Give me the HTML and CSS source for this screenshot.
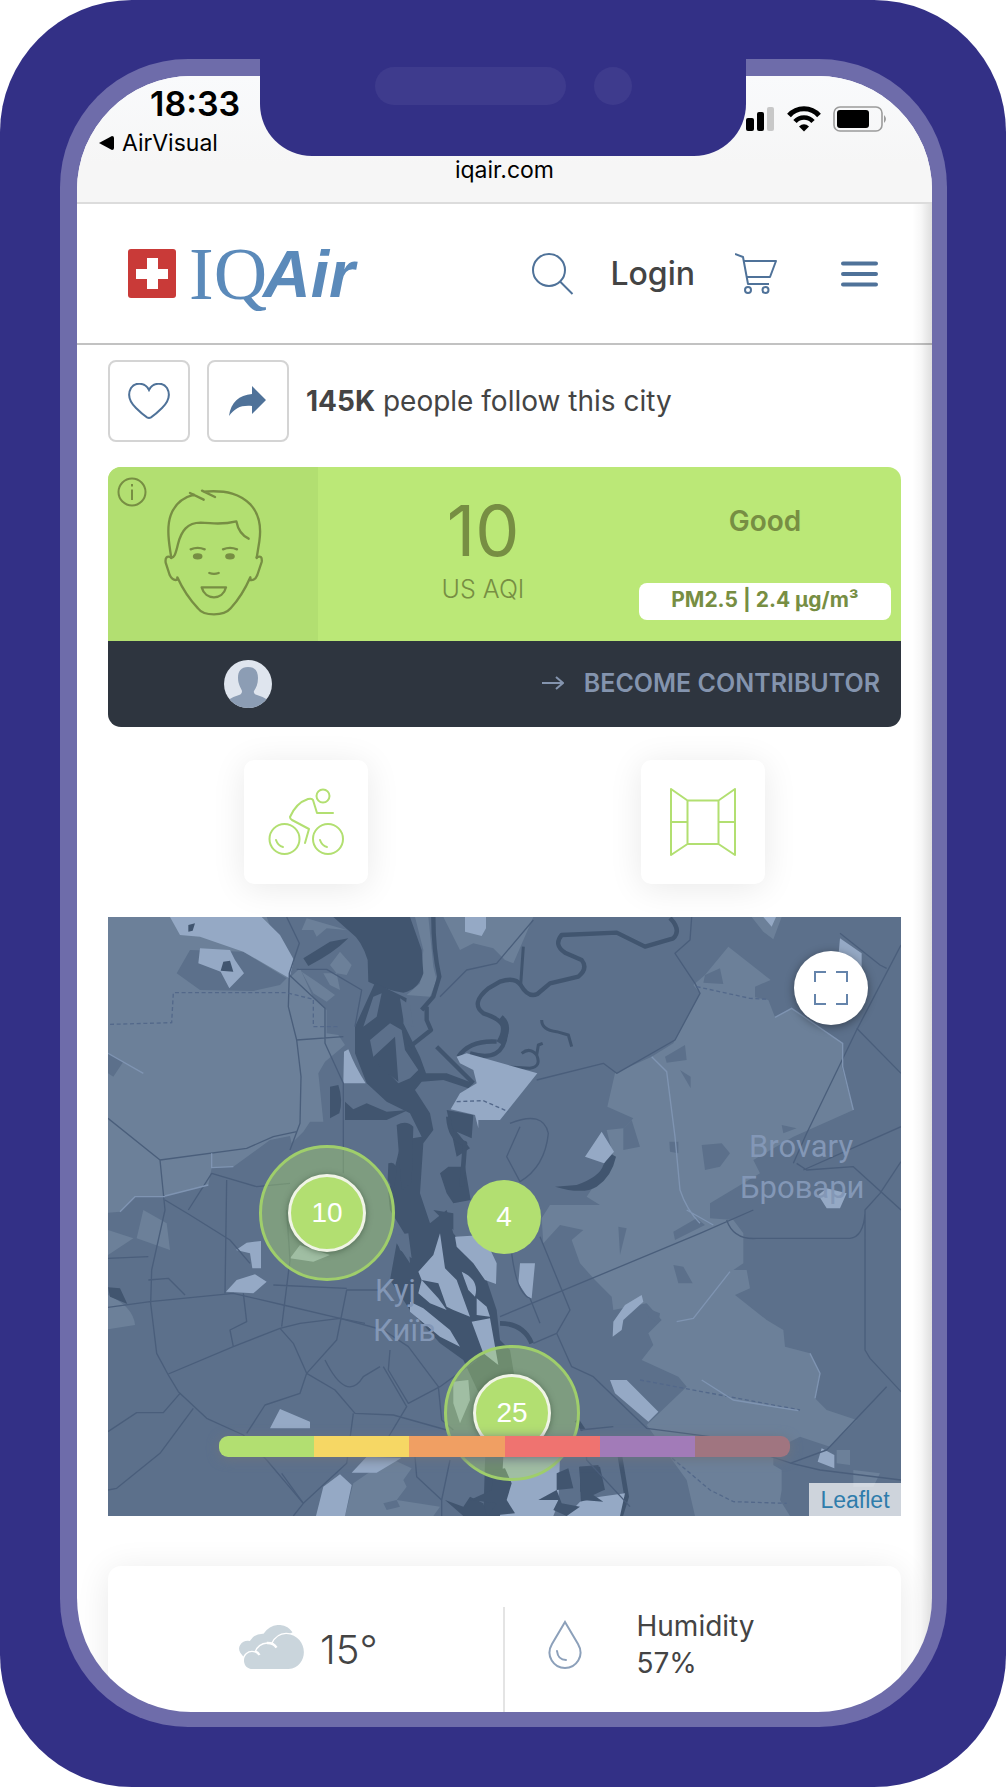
FILE: index.html
```html
<!DOCTYPE html>
<html lang="en">
<head>
<meta charset="utf-8">
<meta name="viewport" content="width=device-width, initial-scale=1">
<title>IQAir – Kyiv air quality</title>
<link rel="stylesheet" href="styles.css">
</head>
<body>
<div class="phone">
  <div class="notch"><span class="speaker"></span><span class="camera"></span></div>
  <div class="bezel">
    <div class="screen">
      <div class="status">
        <div class="status-left">
          <span class="clock">18:33</span>
          <a class="back" href="#"><svg width="15" height="14" viewBox="0 0 15 14" aria-hidden="true"><path d="M0 7 L13 0 Q15 0 15 2 V12 Q15 14 13 14Z"/></svg>AirVisual</a>
        </div>
        <span class="domain">iqair.com</span>
        <svg class="signals" width="142" height="26" viewBox="0 0 142 26" aria-hidden="true">
          <rect x="0" y="12" width="8" height="13" rx="2"/><rect x="11" y="6" width="7" height="19" rx="2"/><rect x="21" y="1" width="7" height="24" rx="2" fill="#c8c8c8"/>
          <g fill="none" stroke="#000" stroke-width="5"><path d="M43 9.500 A20 20 0 0 1 73 9.500"/><path d="M49 15.500 A12 12 0 0 1 67 15.500" stroke-width="4.500"/></g>
          <path d="M53 20.500 Q58 16 63 20.500 L58 25.500Z"/>
          <rect x="88" y="1" width="48" height="24" rx="6" fill="none" stroke="#9b9b9b" stroke-width="1.600"/><rect x="91" y="4" width="32" height="18" rx="3"/><path d="M138 9 q4 4 0 8z" fill="#9b9b9b"/>
        </svg>
      </div>

      <div class="page">
        <header class="header">
          <a class="logo" href="#" aria-label="IQAir home">
            <svg width="48" height="49" viewBox="0 0 48 49" aria-hidden="true"><rect width="48" height="49" rx="3" fill="#c93a38"/><path d="M19 9h11v11h10v10H30v10H19V30H8V20h11z" fill="#fff"/></svg>
            <span class="logo-iq">IQ</span><span class="logo-air">Air</span>
          </a>
          <nav class="tools" aria-label="Main">
            <button class="icon-btn search" aria-label="Search"><svg width="42" height="42" viewBox="0 0 42 42"><circle cx="17" cy="17" r="16"/><path d="M28 28.500 L40.500 41"/></svg></button>
            <a class="login" href="#">Login</a>
            <button class="icon-btn cart" aria-label="Cart"><svg width="42" height="42" viewBox="0 0 42 42"><path d="M0 1 L8 4 L13 31 H34 M8.500 8 H41 L35 24 H11.500"/><circle cx="13" cy="37" r="3"/><circle cx="30.500" cy="37" r="3"/></svg></button>
            <button class="icon-btn menu" aria-label="Menu"><svg width="37" height="26" viewBox="0 0 37 26"><path d="M2 2.500H35M2 13H35M2 23.500H35" stroke-width="4" stroke-linecap="round"/></svg></button>
          </nav>
        </header>

        <main class="content">
          <div class="follow">
            <button class="square" aria-label="Follow"><svg width="42" height="36" viewBox="0 0 42 36"><path d="M21 7 C17 -1 7 -1 3 5 C-1 12 2 19 8 25 Q14 31 19 34.300 Q21 35.500 23 34.300 Q28 31 34 25 C40 19 43 12 39 5 C35 -1 25 -1 21 7Z"/></svg></button>
            <button class="square share" aria-label="Share"><svg width="38" height="30" viewBox="0 0 38 30"><path d="M0 30 C2 16 10 9 23 8 V0 L37 14 L23 28 V20 C12 19 6 22 0 30Z"/></svg></button>
            <p class="followers"><b>145K</b> people follow this city</p>
          </div>

          <section class="aqi">
            <div class="aqi-top">
              <div class="aqi-face">
                <svg class="info" width="30" height="30" viewBox="0 0 30 30" aria-hidden="true"><circle cx="15" cy="15" r="13.500"/><path d="M15 12.500V23M15 7v2.500"/></svg>
                <svg class="face" width="100" height="128" viewBox="310 445 300 384" aria-hidden="true">
                  <path d="M332 652 C325 610 317 560 330 524 C342 490 365 471 400 462 M388 457 L429 477 M424 450 L463 469 M428 453 C500 447 540 461 570 492 C597 522 602 562 596 602 L588 652"/>
                  <path d="M330 650 C340 654 345 640 352 610 C362 570 380 546 420 546 C460 547 480 554 527 542 C532 568 542 584 564 594"/>
                  <path d="M332 650 Q312 642 315 666 L327 703 Q337 722 350 717 L350 710 Q375 765 412 803 Q425 821 460 821 Q495 821 510 803 Q545 765 569 710 L570 718 Q583 720 590 703 L603 664 Q606 642 588 650"/>
                  <path d="M390 626 Q411 617 432 626 M487 626 Q508 617 529 626 M446 697 Q460 702 474 697 M423 740 H496 C486 780 434 780 423 740Z"/>
                  <ellipse cx="411" cy="647" rx="11" ry="6" class="eye"/><ellipse cx="508" cy="647" rx="11" ry="6" class="eye"/>
                </svg>
              </div>
              <div class="aqi-value"><span class="num">10</span><span class="unit">US AQI</span></div>
              <div class="aqi-level"><span class="level">Good</span><span class="pm">PM2.5 | 2.4 µg/m³</span></div>
            </div>
            <div class="aqi-bottom">
              <svg width="48" height="48" viewBox="0 0 48 48" aria-hidden="true"><defs><clipPath id="avatar"><circle cx="24" cy="24" r="24"/></clipPath></defs><g clip-path="url(#avatar)"><path fill="#dfe5ee" d="M0 0h48v48H0z"/><path fill="#8c9db4" d="M24 7 C17 7 14 11 14 18 C14 24 17 28 18 31 Q18 34 15 35 Q8 37 4 40 V48 H44 V40 Q40 37 33 35 Q29 34 30 31 C32 28 34 24 34 18 C34 11 31 7 24 7Z"/></g></svg>
              <a class="contribute" href="#"><svg width="22" height="14" viewBox="0 0 22 14" aria-hidden="true"><path d="M0 7H21M14 1L21 7L14 13"/></svg>BECOME CONTRIBUTOR</a>
            </div>
          </section>

          <div class="tiles">
            <div class="tile"><svg width="76" height="68" viewBox="0 0 76 68" role="img" aria-label="Cycling"><circle cx="16.500" cy="51" r="15"/><circle cx="60" cy="51" r="15"/><circle cx="55" cy="8" r="6.500"/><path d="M65 25 H49 L45 12 Q44 10 40 11 Q28 15 22 29 Q22 31 24 32 L41 41 L37 55 M8 52 Q10 58 15 59 M52 52 Q54 58 59 59"/></svg></div>
            <div class="tile"><svg width="66" height="68" viewBox="0 0 66 68" role="img" aria-label="Windows open"><path d="M17.500 12.500H48.500V56H17.500Z M17.500 12.500 L1 1 V67 L17.500 56 M48.500 12.500 L65 1 V67 L48.500 56 M1 34H17.500 M48.500 34H65"/></svg></div>
          </div>

          <section class="map" aria-label="Air quality map">
            <svg class="terrain" viewBox="0 0 793 599" preserveAspectRatio="xMidYMid slice" aria-hidden="true">
              <rect width="793" height="599" fill="#5c708b"/>
              <g transform="translate(-8 -7) scale(.33333333)">
                <g class="wood">
                  <path d="M24 21H500L568 205L600 175L640 265L680 300V370L715 375L735 405L675 455L655 490L670 635L630 635L610 665L575 700L570 678L510 690L400 770L335 773L325 825L195 858L105 860L60 905L24 908Z"/>
                  <path d="M605 60L620 25L740 60L680 55L650 80L640 60ZM690 165L720 125L755 165L740 195L710 190ZM605 185L650 215L705 255L680 275L640 250ZM670 190L710 190L720 240L690 225Z"/>
                  <path d="M945 21H985L1000 170L1010 210L990 260L920 255L960 220L970 120ZM1030 21H1300L1240 160L1215 150L1180 115L1120 100L1080 120Z"/>
                  <path d="M24 960L100 985L24 1035ZM130 900L200 940L210 1020L110 985ZM24 1155Q100 1190 105 1245L24 1258Z"/>
                  <path d="M1955 21H2045L2020 88L1990 65ZM1815 195L1885 110L2012 210L1965 230V262L2005 270L2025 322L2075 295L2228 400L2225 470L2260 600L2080 680L1960 750L1980 790L1830 880L1830 925L1900 930L1930 970V1060L1900 1080L1940 1080L1950 1135L1905 1155L2000 1230L2050 1260L2055 1310L2130 1330L2160 1390L2145 1465L2180 1500L2270 1530L2190 1610L2100 1580L2020 1620V1665L2045 1680V1740L2040 1770L2070 1818H1785L1760 1710L1640 1545L1760 1430L1735 1400L1625 1350L1660 1305L1645 1270L1685 1230L1640 1180L1540 1200L1535 1160L1485 1110L1440 1060L1415 990L1450 960L1380 945L1330 1000L1325 925L1350 885H1500L1460 860L1540 740L1520 660L1570 655L1600 625L1522 590L1545 490L1655 440L1720 400L1800 250L1780 225Z"/>
                  <path d="M2210 1620H2250V1665L2210 1660ZM2260 1680L2340 1690L2320 1730H2260ZM760 1720L870 1645L935 1675L910 1710L920 1730L890 1770L1020 1790L1000 1818H735Z"/>
                </g>
                <g class="land">
                  <path d="M230 190L270 120L430 125L560 205L540 225L460 243L300 240ZM24 430L70 455L40 500L24 490Z"/>
                  <path d="M1815 195L1860 175L1870 222L1810 218ZM1695 440L1755 405L1760 450L1700 458ZM1740 480L1772 500V535ZM1805 705L1865 700L1890 730L1860 770L1815 780ZM1708 695H1735V730L1710 725ZM1570 655V720L1620 710L1595 630ZM1720 965L1790 925L1815 945L1725 990ZM1720 1065L1750 1070L1778 1120H1735ZM1555 950L1580 955L1560 1035ZM1630 1190L1680 1210L1675 1240L1645 1220ZM850 1780L890 1770L900 1790L860 1800ZM2045 645L2090 655L2050 670Z"/>
                </g>
                <g class="water">
                  <path d="M700 21H930L965 120L970 190Q955 240 910 248Q850 238 805 215L803 150Q785 90 750 65ZM610 145L690 95L745 85Q700 130 625 168Z"/>
                  <path d="M825 218L880 245L920 265L910 340L960 440L978 490L1040 490L1120 520L1105 535L1030 510L965 515L945 540L990 610L1000 660L970 700L960 850L990 940L1040 900L1060 970L1150 1080L1190 1200L1200 1290L1230 1320L1260 1500L1240 1818L1150 1818L1160 1500L1090 1350L1020 1300L930 1200L870 1110L890 1000L930 1060L925 990L870 900L865 850L905 690L965 680L930 610L860 575L800 520L765 430L765 350Z"/>
                  <path d="M690 530L715 525Q730 570 718 610L690 625ZM735 575L760 598L800 580L860 605L925 600L860 630H735ZM890 645Q920 630 940 650L935 820L905 840ZM865 760Q890 750 890 790L880 840L863 810ZM1040 600L1120 615L1115 685L1070 665L1110 715L1070 740ZM1020 790L1045 770H1095L1112 870L1060 880L1040 850Z"/>
                  <path d="M1365 830L1430 825Q1500 800 1510 765L1530 730L1548 740Q1535 800 1490 830Q1450 855 1365 830ZM24 1132L60 1135L82 1182L30 1160Z"/>
                  <path d="M1035 1770L1090 1790L1110 1760L1150 1780L1160 1818H1090ZM1440 1725Q1465 1720 1485 1780L1480 1818H1445ZM1440 1670H1500L1515 1740L1440 1745Z"/>
                </g>
                <g class="land">
                  <path d="M870 340L905 360L915 420L955 480L930 505L895 520L820 440L810 390ZM820 260L845 250L830 320L790 350ZM900 265L930 285L940 350L912 340ZM885 975L925 970L935 1045L900 1020Z"/>
                </g>
                <g class="water"><path d="M820 440L885 380L895 515L840 470ZM1000 900L1060 960L1060 910Z"/></g>
                <g class="river">
                  <path stroke-width="13" d="M1000 21Q1000 120 1018 200L1000 260L965 300M980 290V330L993 360L930 410M1010 410L1120 520M1075 440Q1110 390 1190 395M1110 430Q1210 460 1218 370Q1215 330 1150 310Q1110 280 1165 235L1200 215Q1245 200 1262 225Q1285 265 1312 252L1350 220L1435 200Q1465 175 1445 150L1395 128Q1360 105 1385 75L1550 68L1635 110L1720 85Q1745 60 1710 24"/>
                  <path stroke-width="9" d="M1270 110L1262 225M1325 330Q1325 360 1370 365L1405 375L1415 410M1265 430Q1290 410 1310 435Q1325 470 1290 475L1210 470M1310 435L1315 405L1328 400"/>
                  <path stroke-width="24" d="M1200 325Q1230 350 1200 400"/>
                  <path stroke-width="14" d="M1045 620Q1050 690 1095 700L1085 830M1200 1240Q1270 1240 1295 1300M1560 1640L1580 1760L1562 1818M1430 1530L1450 1560"/>
                </g>
                <g class="light">
                  <path d="M210 21H485L540 75L582 150L568 205L430 125L300 80L240 75ZM300 115L390 120L405 150L432 190L388 235L362 185L295 160ZM1095 21H1158V55L1145 78L1095 65ZM732 425L745 418Q765 470 797 520H730ZM1070 440L1100 430L1312 490L1200 630H1135V655L1125 615L1052 598L1080 550L1130 520L1120 480L1080 460Z"/>
                  <path d="M1505 665L1542 725L1512 760L1455 740ZM1990 21H2028L2015 50ZM2220 85L2285 130V170L2215 140ZM2155 855L2180 835L2240 850L2220 895H2180ZM408 1020L440 998L483 993V1075H457L450 1030ZM378 1145L410 1110L465 1093L500 1115L460 1150ZM540 1497L630 1535V1555H510Z"/>
                  <path d="M1020 970L1035 1075L1070 1110L1110 1220L1060 1200L1040 1190L1015 1120L965 1110L955 1085L1000 1035ZM1065 980L1150 975L1190 1060L1188 1122L1155 1110L1120 1060L1070 1010ZM965 1110L1015 1165L1040 1200L990 1180L955 1150ZM930 1175L970 1195L1050 1260L1080 1310L1020 1280L930 1205ZM1085 1085Q1140 1110 1125 1160L1105 1140ZM1130 1165L1160 1190L1170 1220L1130 1215ZM1115 1235L1170 1225L1195 1365L1150 1330ZM1060 1415L1105 1410L1110 1470L1080 1540L1060 1480Z"/>
                  <path d="M1260 1060H1305L1295 1165H1285L1255 1120ZM1625 1155L1630 1175L1570 1230L1565 1260L1538 1280L1540 1235L1575 1185ZM1530 1410H1580L1675 1505L1645 1535L1545 1450ZM2165 1615L2203 1635V1675L2153 1655ZM670 1730L720 1693L755 1725L735 1818H648ZM755 1688L800 1640L905 1643L830 1688ZM1210 1640H1380L1375 1780L1360 1818H1200ZM1500 1760L1575 1750L1560 1818H1400L1440 1775ZM570 1045L600 1005L690 1035L640 1055Z"/>
                </g>
                <g class="water"><path d="M1180 1680L1215 1675L1235 1720L1220 1770L1245 1810L1165 1818L1190 1780L1110 1770L1175 1740ZM1437 1670L1495 1665L1512 1740L1480 1755L1510 1775L1445 1770ZM1370 1690L1405 1675L1420 1735L1370 1740L1385 1780L1440 1790L1400 1818L1360 1800L1375 1770L1315 1770L1370 1740ZM265 45L285 40L278 62L265 65ZM370 155L390 152L400 185L362 182Z"/></g>
                <g class="road">
                  <path d="M560 21L598 100L568 190L565 290L590 390L603 500L600 640L570 720M568 195L675 295V400L730 520V790M590 178H680L785 240L765 350M590 390L730 380M24 625L180 750L440 715L520 680L590 665M180 750L195 900L155 1080L152 1180L170 1330L205 1395L235 1445L320 1525L430 1575L500 1650L610 1780L580 1818M610 1780L740 1660L760 1510M195 870L270 915L390 990L450 1060M265 900L335 790L470 830L570 820M380 810L375 1150M24 1192L150 1175L400 1150L550 1185L720 1225L850 1260L925 1310L1015 1430L1025 1530L1060 1560"/>
                  <path d="M205 1392L400 1310L540 1255L600 1240L720 1225L795 1240M545 1250L570 1050L560 900M540 1255L580 1300L620 1390L710 1290L740 1140H860M620 1390L600 1450L495 1485L440 1570M620 1390L705 1440L765 1510L880 1515L1040 1560M675 1350Q740 1480 790 1400L840 1370M430 1150L440 1235L390 1260L400 1310M24 1045L145 1040M145 1110L205 1105L255 1155M520 1125L740 1135M24 1565L110 1508H190L240 1450M24 1740L50 1735L180 1630L280 1495M850 1370L920 1490L860 1590M870 1320L865 1380L925 1480L1020 1430L1130 1350M940 1580L950 1700L1025 1770V1818M1025 1770L1050 1650M545 1690L610 1780"/>
                  <path d="M1020 260L1100 180L1190 160L1300 30M1775 21L1770 90L1725 130L1785 220L1800 250L1725 390L1550 490L1510 460L1310 510M1230 640Q1330 600 1345 670Q1335 770 1260 815L1220 740L1260 650M2220 70L2340 165L2360 175M2403 105L2270 360L2120 670L2080 760M2270 355L2403 490M2090 760L2120 780L2260 770L2403 900M2403 755L2340 850L2295 900V1320L2310 1345L2403 1445M2110 780L2403 650M1200 1220L1380 1145L1800 970L1960 900M1320 980L1410 1200L1370 1270L1415 1370L1480 1400L1640 1555L1830 1580L2075 1660L2160 1680L2403 1710M1235 1030Q1250 1150 1290 1165L1320 1240M1300 1300L1370 1270M1880 930Q1900 990 1970 985H2250Q2290 980 2295 910M2360 1430L2180 1620L2070 1660M1455 1580L1460 1650L1590 1790M1440 1560L1540 1550"/>
                </g>
                <path class="dash" d="M30 343L215 338L220 248H560L640 268V350H715M1070 575L1150 572L1225 605M1790 230L1950 265L2005 268M1620 1410L2100 1500M1640 1580L1830 1740L1900 1775L2060 1780"/>
                <path class="trail" d="M1655 440L1700 485L1725 680L1740 840Q1760 900 1800 940M1730 1235L1780 1225L1890 1085M24 430L130 490M335 730V773L400 770M195 858L325 825M1805 1410L1900 1470L2095 1502M1760 900L1840 945M2025 322L2075 295L2228 400V470L2260 600M2130 1330L2160 1390L2145 1465M60 905L105 860H195"/>
              </g>
              <g class="places"><text x="641" y="240">Brovary</text><text x="632" y="281">Бровари</text><text x="267" y="384">Kyj</text><text x="265" y="424">Київ</text></g>
            </svg>
            <button class="expand" aria-label="Full screen"><svg width="34" height="34" viewBox="0 0 34 34"><path d="M1 11V1H12M22 1H33V11M33 23V33H22M12 33H1V23"/></svg></button>
            <div class="marker ringed m10"><span>10</span></div>
            <div class="marker m4"><span>4</span></div>
            <div class="marker ringed m25"><span>25</span></div>
            <div class="scale"><i class="good"></i><i class="moderate"></i><i class="sensitive"></i><i class="unhealthy"></i><i class="very"></i><i class="hazard"></i></div>
            <a class="leaflet" href="#">Leaflet</a>
          </section>

          <section class="weather">
            <div class="temp">
              <svg width="65" height="44" viewBox="717 375 194 132" aria-hidden="true"><g fill="#cad5dc"><path d="M730 470Q710 450 720 435Q730 420 749 423Q762 400 790 401Q810 373 840 375Q865 378 877 397L800 440Z"/><path d="M752 507C730 503 725 475 740 462Q750 453 766 458Q775 432 802 431L816 432Q830 402 858 402C925 405 930 500 865 507Z" stroke="#fff" stroke-width="8" paint-order="stroke"/></g><path d="M766 455Q773 457 778 465M800 429Q820 428 829 443" fill="none" stroke="#fff" stroke-width="7"/></svg>
              <span class="degrees">15°</span>
            </div>
            <div class="humidity">
              <svg width="34" height="49" viewBox="0 0 34 49" aria-hidden="true"><path d="M17 2 L30 24 C37 36 28 48 17 48 C6 48 -3 36 4 24Z M9 31 Q10 40 18 40"/></svg>
              <dl><dt>Humidity</dt><dd>57%</dd></dl>
            </div>
          </section>
        </main>
      </div>
    </div>
  </div>
</div>
</body>
</html>
```
FILE: styles.css
```css
* { box-sizing: border-box; }

body {
  margin: 0;
  background: #fff;
  color: #444;
  font-family: Inter, "Liberation Sans", sans-serif;
  font-size: 28px;
}

a { color: inherit; text-decoration: none; }
button { padding: 0; border: 0; background: none; font: inherit; cursor: pointer; }
svg { display: block; flex: none; }
p, dl, dd { margin: 0; }

/* Device */
.phone {
  position: relative;
  padding: 59px 59px 60px 60px;
  border-radius: 132px;
  background: #333086;
}
.bezel {
  padding: 17px 15px 15px 17px;
  border-radius: 128px;
  background: #6e6caa;
}
.screen {
  overflow: hidden;
  border-radius: 114px;
  background: #fff;
}
.notch {
  position: absolute;
  z-index: 2;
  top: 0;
  left: 50%;
  display: flex;
  gap: 28px;
  width: 486px;
  height: 156px;
  padding: 67px 0 0 115px;
  transform: translateX(-50%);
  border-radius: 0 0 52px 52px;
  background: #333086;
}
.speaker, .camera { height: 38px; border-radius: 19px; background: #3e3b8d; }
.speaker { width: 191px; }
.camera { width: 38px; }

/* Status bar */
.status {
  display: grid;
  grid-template-columns: 1fr auto 1fr;
  height: 128px;
  padding: 8px 22px 18px;
  border-bottom: 2px solid #dcdcdc;
  background: linear-gradient(#f9fafc, #f6f6f6 70%);
  color: #000;
  font-size: 23px;
  line-height: 28px;
}
.status-left { display: flex; flex-direction: column; gap: 5px; }
.clock { padding-left: 51px; font-size: 34px; font-weight: 600; line-height: 40px; }
.back { display: flex; align-items: center; gap: 8px; }
.domain { align-self: end; }
.signals { justify-self: end; margin: 22px 22px 0 0; }

/* Site header */
.page { position: relative; }
.page::after {
  content: "";
  position: absolute;
  inset: 0 0 0 auto;
  width: 20px;
  background: linear-gradient(to right, transparent, rgba(0, 0, 0, .03) 45%, rgba(0, 0, 0, .13));
  pointer-events: none;
}
.header {
  display: flex;
  align-items: center;
  justify-content: space-between;
  height: 141px;
  padding: 0 54px 0 51px;
  border-bottom: 2px solid #c2c2c2;
}
.logo { display: flex; align-items: center; color: #5b8aba; line-height: 80px; }
.logo-iq { margin-left: 13px; font-family: "Liberation Serif", serif; font-size: 74px; }
.logo-air { margin-left: -4px; font-family: "Liberation Sans", sans-serif; font-size: 66px; font-weight: 700; font-style: italic; }
.tools { display: flex; align-items: center; gap: 40px; }
.icon-btn svg { fill: none; stroke: #4f7299; stroke-width: 2; stroke-linejoin: round; }
.search { margin-right: -4px; }
.menu { margin-left: 24px; }
.login { font-size: 32px; font-weight: 500; }

/* Follow row */
.content { padding: 15px 31px 0; }
.follow { display: flex; align-items: center; gap: 17px; margin-bottom: 25px; }
.square {
  display: grid;
  place-items: center;
  width: 82px;
  height: 82px;
  border: 2px solid #d4d4d4;
  border-radius: 8px;
  background: #fff;
}
.square svg { fill: none; stroke: #4f7299; stroke-width: 2; }
.share svg { fill: #4f7299; stroke: none; }
.followers b { font-weight: 700; }

/* AQI card */
.aqi { overflow: hidden; border-radius: 13px; color: #778e43; }
.aqi-top { display: grid; grid-template-columns: 210px 1fr 252px; height: 174px; padding-right: 10px; background: #bbe877; }
.aqi-face { display: flex; padding: 10px 0 0 9px; background: #b2df71; }
.aqi-face svg { fill: none; stroke: #778e43; stroke-width: 2; }
.info { margin-right: 17px; }
.aqi-face .face { margin-top: 12px; stroke-width: 7; stroke-linecap: round; stroke-linejoin: round; }
.aqi-face .eye { fill: #778e43; }
.aqi-value { display: flex; flex-direction: column; align-items: center; padding: 22px 0 0 9px; }
.num { font-size: 70px; line-height: 84px; }
.unit { font-size: 25px; font-weight: 300; line-height: 32px; }
.aqi-level { display: flex; flex-direction: column; justify-content: space-between; align-items: center; padding: 36px 0 21px; }
.level { font-weight: 600; line-height: 36px; }
.pm { width: 100%; height: 37px; border-radius: 8px; background: #fff; font-size: 21px; font-weight: 700; line-height: 34px; text-align: center; }
.aqi-bottom { display: flex; align-items: center; justify-content: space-between; height: 86px; padding: 0 21px 0 116px; background: #2e353f; }
.contribute { display: flex; align-items: center; gap: 20px; padding-bottom: 2px; color: #8494ae; font-size: 25px; font-weight: 600; }
.contribute svg { fill: none; stroke: #8494ae; stroke-width: 2; }

/* Recommendation tiles */
.tiles { display: grid; grid-template-columns: 1fr 1fr; justify-items: center; padding: 33px 0; }
.tile { display: grid; place-items: center; width: 124px; height: 124px; border-radius: 10px; background: #fff; box-shadow: 0 4px 34px rgba(0, 0, 0, .09); }
.tile svg { fill: none; stroke: #b2df71; stroke-width: 2; stroke-linecap: round; stroke-linejoin: round; }

/* Map */
.map { position: relative; height: 599px; overflow: hidden; }
.terrain { width: 100%; height: 100%; }
.wood { fill: #6c8099; }
.land { fill: #5c708b; }
.water { fill: #41556f; }
.light { fill: #95a9c5; }
.river { fill: none; stroke: #41556f; stroke-linejoin: round; }
.road { fill: none; stroke: #4a5e7b; stroke-width: 4; stroke-linejoin: round; }
.dash { fill: none; stroke: #53688a; stroke-width: 4; stroke-dasharray: 12 8; }
.trail { fill: none; stroke: #7f94b2; stroke-width: 4; }
.places { fill: #8397b6; font-family: Roboto, sans-serif; font-size: 31px; }
.expand {
  position: absolute;
  top: 34px;
  right: 33px;
  display: grid;
  place-items: center;
  width: 74px;
  height: 74px;
  border-radius: 50%;
  background: #fff;
  box-shadow: 0 2px 10px rgba(0, 0, 0, .4);
}
.expand svg { fill: none; stroke: #6584ab; stroke-width: 2; }
.marker { position: absolute; display: grid; place-items: center; transform: translate(-50%, -50%); border-radius: 50%; }
.marker span {
  width: 74px;
  height: 74px;
  border-radius: 50%;
  background: #b2df71;
  color: #fff;
  font-family: "Liberation Sans", sans-serif;
  line-height: 74px;
  text-align: center;
}
.ringed { width: 136px; height: 136px; border: 3px solid #9fce6b; background: rgba(178, 223, 113, .4); }
.ringed span { width: 78px; height: 78px; border: 3px solid #f0f4e6; line-height: 72px; box-shadow: 0 1px 6px rgba(40, 60, 40, .5); }
.m10 { top: 296px; left: 219px; }
.m4 { top: 300px; left: 396px; }
.m25 { top: 496px; left: 404px; }
.scale {
  position: absolute;
  right: 111px;
  bottom: 59px;
  left: 111px;
  display: flex;
  height: 21px;
  overflow: hidden;
  border-radius: 9px;
  box-shadow: 0 2px 12px #6d7480;
}
.scale i { flex: 1; }
.good { background: #b2df71; }
.moderate { background: #f6d764; }
.sensitive { background: #f09f63; }
.unhealthy { background: #ef7370; }
.very { background: #a27bb8; }
.hazard { background: #a07580; }
.leaflet {
  position: absolute;
  right: 0;
  bottom: 0;
  width: 92px;
  height: 33px;
  background: rgba(255, 255, 255, .7);
  color: #2f7cab;
  font-family: "Liberation Sans", sans-serif;
  font-size: 23px;
  line-height: 35px;
  text-align: center;
}

/* Weather */
.weather {
  display: grid;
  grid-template-columns: 1fr 1fr;
  height: 146px;
  margin-top: 50px;
  padding-top: 41px;
  border-radius: 13px 13px 0 0;
  box-shadow: 0 4px 34px rgba(0, 0, 0, .09);
}
.temp { display: flex; gap: 16px; padding: 18px 0 0 131px; border-right: 2px solid #e4e4e4; font-size: 40px; font-weight: 300; }
.degrees { line-height: 50px; }
.humidity { display: flex; gap: 55px; padding: 1px 0 0 43px; line-height: 37px; }
.humidity svg { margin-top: 12px; fill: none; stroke: #8ca0ba; stroke-width: 2; stroke-linecap: round; }
```
